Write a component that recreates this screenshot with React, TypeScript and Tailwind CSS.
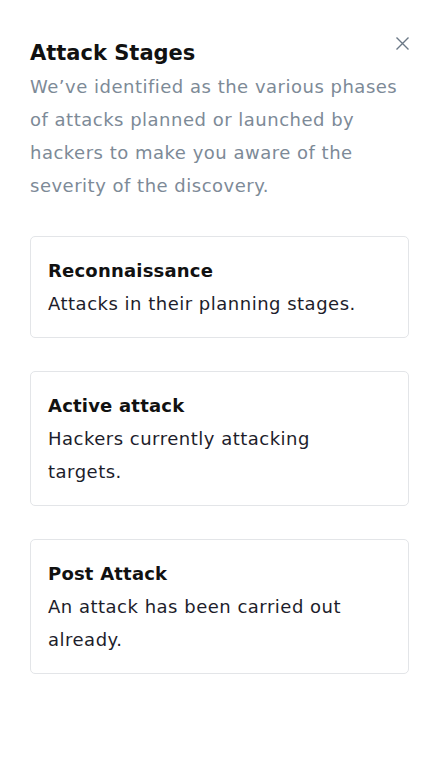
import React from 'react';

const stages = [
  { title: 'Reconnaissance', text: 'Attacks in their planning stages.' },
  { title: 'Active attack', text: 'Hackers currently attacking targets.' },
  { title: 'Post Attack', text: 'An attack has been carried out already.' },
];

const App = () => {
  return (
    <div className="min-h-screen w-[445px] bg-white font-['DejaVu_Sans',sans-serif]">
      <div className="relative pl-[30px] pr-[36px] pt-[38px]">
        {/* Close */}
        <button className="absolute right-[35px] top-[36px] text-[#6b7886]">
          <svg width="15" height="15" viewBox="0 0 15 15" fill="none" stroke="currentColor" strokeWidth="1.4">
            <path d="M1.5 1.5 L13.5 13.5 M13.5 1.5 L1.5 13.5" />
          </svg>
        </button>

        <h2 className="text-[21px] font-bold leading-[30px] text-[#111]">Attack Stages</h2>
        <p className="mt-[2px] max-w-[372px] text-[18px] leading-[33px] tracking-[0.5px] text-[#7d8a97]">
          We’ve identified as the various phases of attacks planned or launched by hackers to make
          you aware of the severity of the discovery.
        </p>

        <div className="mt-[34px] flex flex-col gap-[33px]">
          {stages.map((s) => (
            <div key={s.title} className="rounded-[5px] border border-[#e3e5e8] py-[17px] pl-[17px] pr-[40px]">
              <h3 className="text-[18px] font-bold leading-[33px] tracking-[0.2px] text-[#111]">{s.title}</h3>
              <p className="text-[18px] leading-[33px] tracking-[0.5px] text-[#1d1d2b]">{s.text}</p>
            </div>
          ))}
        </div>
      </div>
    </div>
  );
};

export default App;
